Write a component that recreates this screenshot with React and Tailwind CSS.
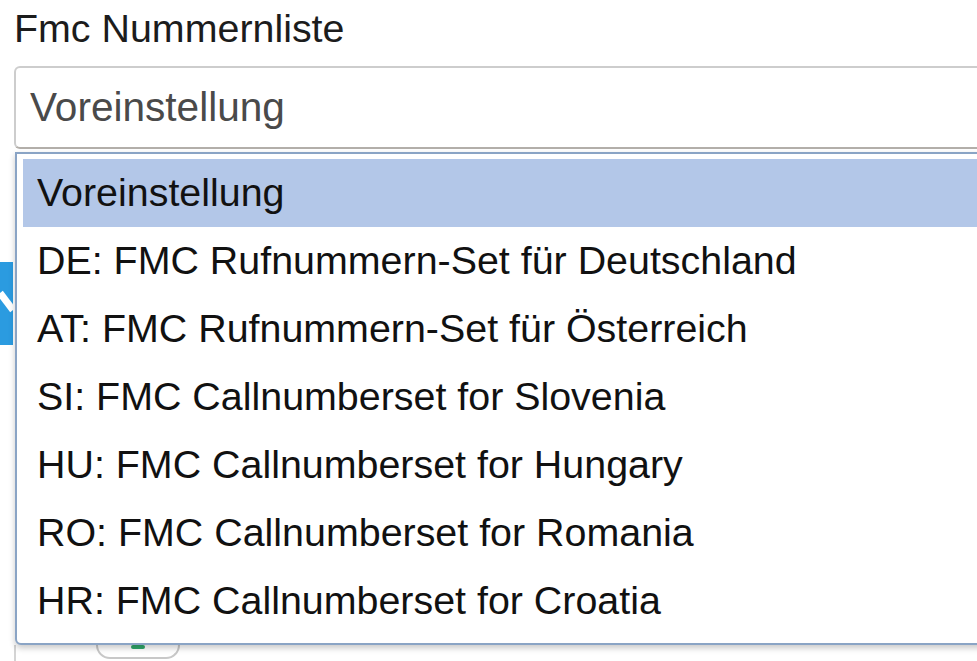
import React from 'react';

const options = [
  'Voreinstellung',
  'DE: FMC Rufnummern-Set für Deutschland',
  'AT: FMC Rufnummern-Set für Österreich',
  'SI: FMC Callnumberset for Slovenia',
  'HU: FMC Callnumberset for Hungary',
  'RO: FMC Callnumberset for Romania',
  'HR: FMC Callnumberset for Croatia',
];

const App = () => {
  return (
    <div className="relative w-[977px] h-[661px] overflow-hidden bg-white font-['Liberation_Sans',Arial,sans-serif]">
      {/* Label */}
      <div className="pt-[6px] pl-[14px] text-[39.4px] leading-[45px] text-[#1c1c1c]">
        Fmc Nummernliste
      </div>

      {/* Select box */}
      <div className="mt-[15px] ml-[14px] h-[83px] w-[1000px] rounded-[6px] border-2 border-[#cdcdcd] border-b-[#b3afaa] flex items-center pl-[14px] text-[40.6px] text-[#4a4a4a]">
        Voreinstellung
      </div>

      {/* Page content behind the open list */}
      <div className="mt-[113px] w-[13px] h-[83px]">
        <svg width="13" height="83" viewBox="0 0 13 83">
          <rect x="0" y="0" width="13" height="83" fill="#2b9be0" />
          <path d="M0 31 L13 48" stroke="#ffffff" strokeWidth="7" />
        </svg>
      </div>
      <div className="mt-[300px] ml-[14px] h-[30px] border-l-2 border-[#d4d4d4] flex">
        <div className="ml-[80px] w-[84px] h-[14px] rounded-b-[14px] border-2 border-t-0 border-[#c8c8c8] flex justify-center">
          <div className="w-[14px] h-[4px] rounded-full bg-[#2fa86a]" />
        </div>
      </div>

      {/* Open dropdown list */}
      <div className="absolute left-[15px] top-[152px] w-[1000px] border-2 border-[#8aa4c5] rounded-bl-[6px] bg-white pt-[5px] pl-[6px] pb-[8px] shadow-[0_3px_6px_rgba(0,0,0,0.22)]">
        {options.map((opt, i) => (
          <div
            key={opt}
            className={`h-[68px] flex items-center pl-[14px] text-[39.4px] text-[#111111] ${
              i === 0 ? 'bg-[#b3c7e8]' : ''
            }`}
          >
            {opt}
          </div>
        ))}
      </div>
    </div>
  );
};

export default App;
